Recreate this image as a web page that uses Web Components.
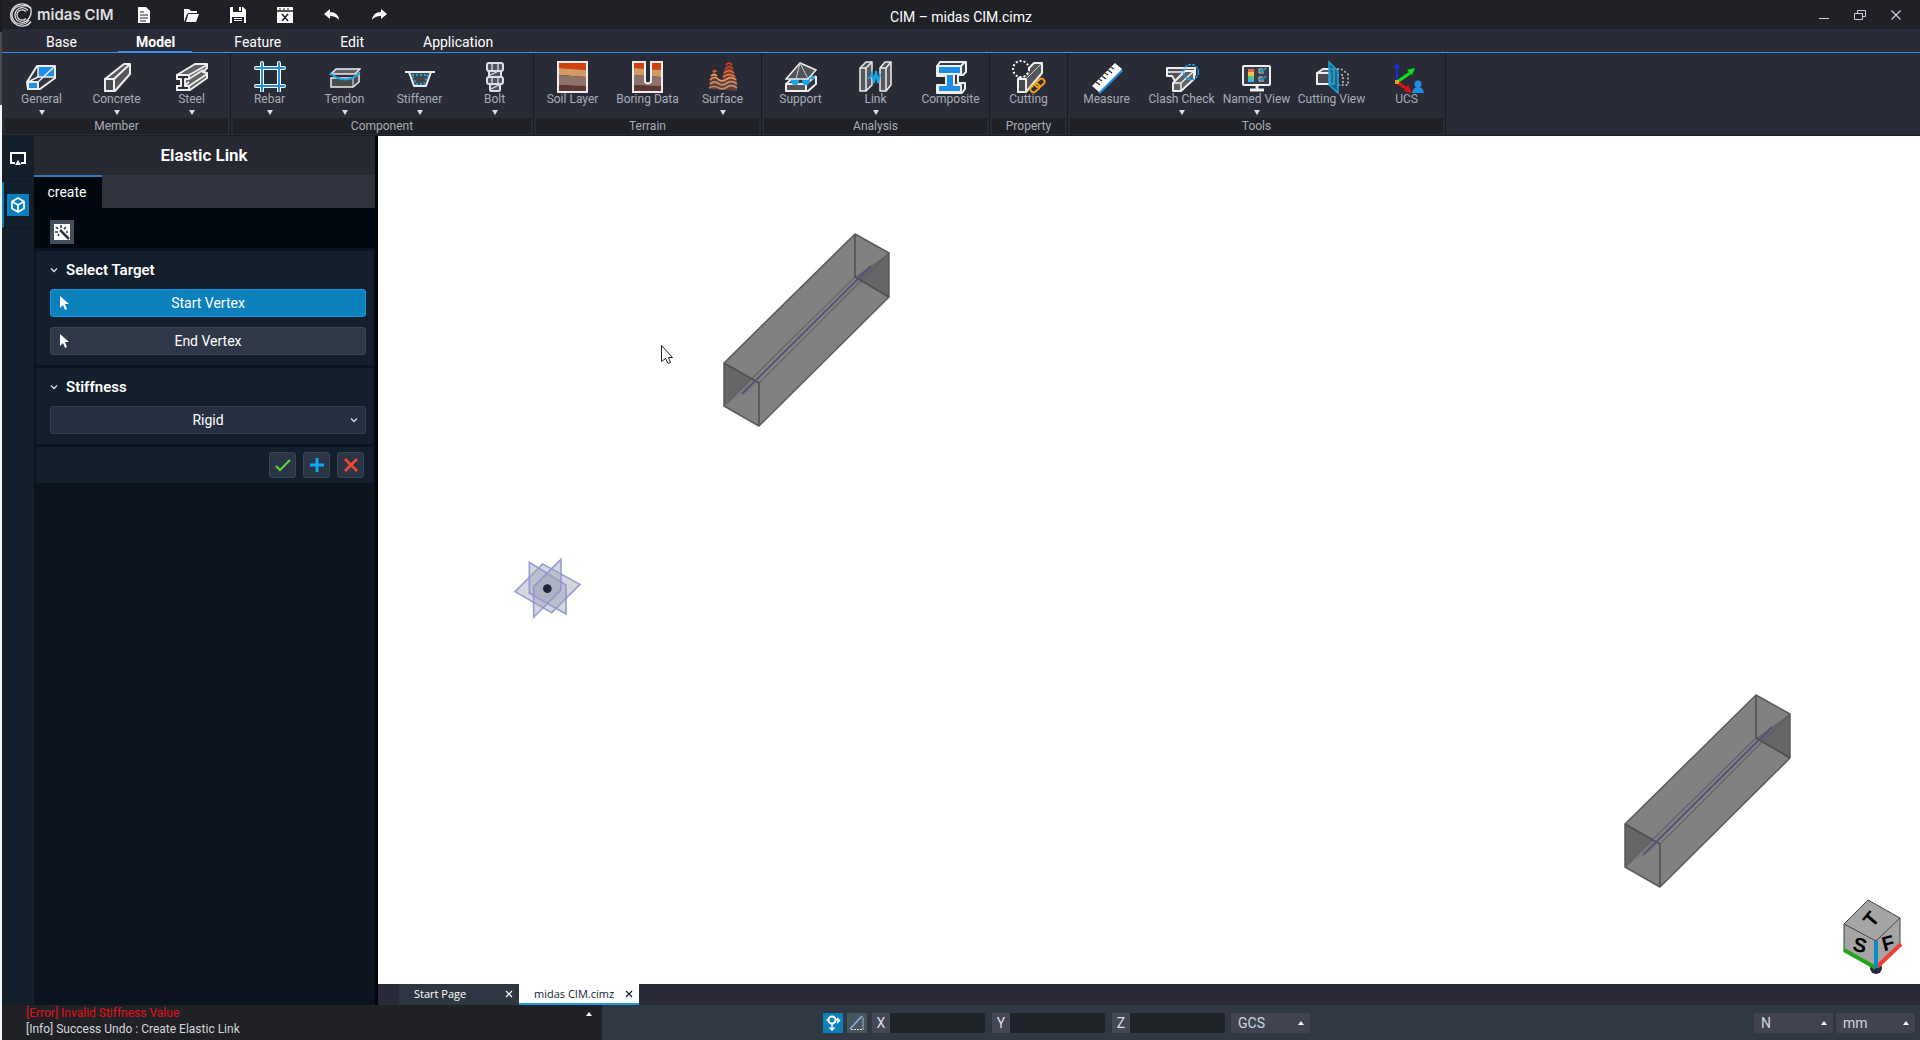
<!DOCTYPE html>
<html lang="en">
<head>
<meta charset="utf-8">
<title>CIM – midas CIM.cimz</title>
<style>
  html, body { margin: 0; height: 100%; overflow: hidden; }
  body {
    font-family: Roboto, "Liberation Sans", sans-serif; font-size: 14px; color: #fff;
    --bar: #202127; --ribbon: #292c36; --rail: #13202c; --section: #131f2d; --accent: #0c80ba; --line: #3a8fee;
  }
</style>
</head>
<body>
<cim-app></cim-app>

<script>
const W = 'stroke="#eee" stroke-width="2" stroke-linejoin="round"';
const chain = '<g fill="none" stroke="#f0a010" stroke-width="2"><rect x="-5" y="-3" width="10" height="6" rx="3" transform="translate(23 28) rotate(-40)"/><rect x="-5" y="-3" width="10" height="6" rx="3" transform="translate(28 23) rotate(-40)"/></g>';
const strata = `<path d="M3 3h27v7L3 8z" fill="#d2400c"/><path d="M3 8l27 2v7L3 15z" fill="#d49a62"/><path d="M3 15l27 2v10L3 25z" fill="#8d736a"/><path d="M3 25l27 1v5H3z" fill="#5e3734"/>`;
/* name: [viewBox size, drawing] */
const ICONS = {
  general: [32, `<path d="M1 22 11 6h18v12L14 29H2z" fill="#33363f" ${W}/><path d="M12 7h16v10H12z" fill="#1e8fe4"/><path d="M2 22h10v7H2z" fill="#1e8fe4" ${W} stroke-width="1.500"/><path d="M12 22 29 6M2 22l10-5M12 7v10h16" fill="none" stroke="#eee" stroke-width="1.500"/>`],
  concrete: [32, `<path d="M4 19 23 4h6v10L14 31H4z" fill="#54565a" ${W}/><path d="M4 19h9v12H4z" fill="#4a4b50" ${W}/><path d="M13 19 29 4" ${W}/>`],
  steel: [32, `<path d="M1 15 19 4h12v4l-4 4 4 1v5L14 30H1v-4h4v-7H1z" fill="#606266" ${W}/><path d="M1 15h12v4h-4v7h4v4H1v-4h4v-7H1z" fill="#2c2f38" ${W}/><path d="M13 15 31 5M13 19l14-9M9 25l4-3M13 26l18-12" ${W}/>`],
  rebar: [32, `<g stroke="#fff" stroke-width="4" stroke-linecap="round"><path d="M2 8h28M2 26h28M8 3v28M25 3v28"/></g><g stroke="#1e8fe4" stroke-width="2" stroke-linecap="round"><path d="M2 8h28M2 26h28M8 3v28M25 3v28"/></g>`],
  tendon: [32, `<path d="M7 9h24l-5 5H2z" fill="#606266" stroke="#eee" stroke-width="1.500"/><path d="M2 18v9h22l6-5v-9l-6 5z" fill="#484a4f" stroke="#eee" stroke-width="1.500"/><path d="M24 18v9" stroke="#eee"/><path d="M1 13q15 13 30 0" fill="none" stroke="#1ba5e0" stroke-width="2"/>`],
  stiffener: [32, `<path d="M1 12h30M5 12l5 14h12l5-14" fill="#44464c" ${W}/><path d="M8 15h16l-4 9h-8z" fill="none" stroke="#1ba5e0" stroke-width="2" stroke-dasharray="2 2"/>`],
  bolt: [32, `<g fill="#50535a" stroke="#dde" stroke-width="2"><rect x="8" y="3" width="16" height="8" rx="2"/><rect x="10" y="11" width="12" height="6"/><rect x="8" y="17" width="16" height="7" rx="2"/><rect x="11" y="24" width="10" height="7" rx="1"/><path d="M13 3v8M19 3v8M13 17v7M19 17v7M11 15l9-4M12 29l8-4" stroke-width="1.300"/></g>`],
  soil: [34, `${strata}<path d="M2 2h29v30H2z" fill="none" stroke="#eee" stroke-width="2"/>`],
  boring: [34, `${strata}<path d="M14 2h6v20q-3 3-6 0z" fill="#292c36"/><path d="M2 2h12v20q3 3 6 0V2h11v30H2z" fill="none" stroke="#eee" stroke-width="2"/>`],
  surface: [32, `<path d="M2 29 3 18l4-8 4 8 4 3 2-11q4-8 7-4l6 14v11z" fill="#5a4140"/><g fill="none" stroke-width="1.700"><path d="M19 5q3-4 6 0M18 9q5-5 8 0" stroke="#e43c1c"/><path d="M6 12q2-3 3 0M17 13q5-5 10 0M16 17q7-5 12 0" stroke="#f06a30"/><path d="M4 16q3-3 6 0M3 20q5-5 9 0 4 2 8-1 5-3 9 1" stroke="#f09450"/><path d="M3 24q5-4 9 0 4 2 8-1 5-3 10 1M2 28q5-3 10 0 4 2 8-1 5-3 10 1" stroke="#c98a62"/></g>`],
  support: [32, `<path d="M1 24 9 17h22v7l-9 8H1z" fill="#33363f" ${W}/><path d="M1 24h20v7H1z" fill="#54565a" ${W}/><path d="M21 24 31 16" ${W}/><circle cx="10" cy="21" r="4" fill="#1ba5e8"/><circle cx="21" cy="21" r="4" fill="#1ba5e8"/><path d="M26 14l4 3-2 3-4-2z" fill="#1ba5e8"/><path d="M1 19 15 3l16 7-8 9z" fill="#505259" stroke="#eee" stroke-width="1.500"/><path d="M15 3l8 16M15 3l-4 16" stroke="#ccc"/>`],
  link: [34, `<g fill="#55575c" stroke="#eee" stroke-width="1.500" stroke-linejoin="round"><path d="M1 8 7 2h6v23l-6 6H1z"/><path d="M1 8h6v23M7 8l6-6" fill="none"/><path d="M21 8 26 2h6v23l-5 6h-6z"/><path d="M21 8h6v23M27 8l5-6" fill="none"/></g><path d="M9 18h2l2-5 2 10 2-12 2 12 2-9" fill="none" stroke="#1ba5e8" stroke-width="2"/>`],
  composite: [34, `<path d="M3 6 6 2h26v10l-3 3h-5v8h7v6l-3 4H3v-8h9v-9H3z" fill="#3a3d46" ${W}/><path d="M4 6h23v8h-7v11h7v7H4v-7h8V14H4z" fill="#1e8fe4" ${W}/><path d="M27 6l4-4" ${W}/><path d="M3 14h24" stroke="#eee" stroke-width="2"/>`],
  cutting: [34, `<path d="M6 19 22 3h8v10L14 32H6z" fill="#54565a" ${W}/><path d="M6 19h8v13H6z" fill="#46484d" ${W}/><path d="M14 19 29 4" stroke="#ccc"/><circle cx="9" cy="9" r="8" fill="#292c36" stroke="#fff" stroke-width="2" stroke-dasharray="2 2"/>${chain}`],
  measure: [34, `<path d="M8 32 31 9l2 2L10 34z" fill="#1e8fe4"/><path d="M2 26 25 3l7 6L9 32z" fill="#fff"/><path d="M6 22l4 3M9 19l3 2M12 16l4 3M15 13l3 2M18 10l4 3M21 7l3 2" stroke="#333" stroke-width="1.500"/>`],
  clash: [34, `<path d="M2 8h28v7l-9 6H10L7 16H2z" fill="#50535a" ${W}/><path d="M8 23 20 11h9v8l-13 12H8z" fill="#606266" ${W}/><path d="M8 23h8v8M16 23l13-12M2 12h16" fill="none" stroke="#eee" stroke-width="1.500"/><circle cx="26" cy="12" r="7.500" fill="none" stroke="#1ba5e8" stroke-width="1.500" stroke-dasharray="3 1"/>`],
  named: [34, `<rect x="3" y="6" width="27" height="19" rx="1" fill="#3b3e46" ${W}/><path d="M17 25v5M10 30h14" stroke="#eee" stroke-width="3"/><path d="M8 9h6v3H8z" fill="#f06a50"/><path d="M8 12h6v4H8z" fill="#f0c050"/><path d="M8 16h6v3H8z" fill="#54c86a"/><path d="M8 19h6v3H8z" fill="#38b8f0"/><path d="M23 9h-4v4h5M23 17h-4v4h5" fill="none" stroke="#ccc"/><path d="M20 10l2 2 4-4M20 18l2 2 4-4" fill="none" stroke="#1ba5e8" stroke-width="1.500"/>`],
  cutview: [34, `<path d="M2 13 8 9h11v15H2z" fill="#55575c" ${W}/><path d="M2 13h13v11H2z" fill="#484a4f" ${W}/><path d="M22 9h4l7 5v11H22M22 15h6v10" fill="none" stroke="#ccc" stroke-width="1.500" stroke-dasharray="2 2"/><path d="M14 2l9 9v22l-9-8z" fill="#0e78a8" fill-opacity=".8" stroke="#1ba5e0" stroke-width="1.500"/>`],
  ucs: [34, `<path d="M7 22V6" stroke="#1030d8" stroke-width="2"/><path d="M4 8l3-6 3 6z" fill="#1030d8"/><path d="M7 22 20 13" stroke="#08e818" stroke-width="3"/><path d="M17 10l8-2-3 7z" fill="#08e818"/><path d="M7 22l10 7" stroke="#e01010" stroke-width="3"/><path d="M18 25l4 8-8-2z" fill="#e01010"/><path d="M5 20h4v4H5z" fill="#f0a010"/><circle cx="28" cy="24" r="3.500" fill="#1e8fe4"/><path d="M22 33q1-6 6-6t6 6z" fill="#1e8fe4"/>`],
  doc: [18, `<path d="M3 1h8l4 4v12H3z" fill="#fff"/><path d="M5 6h4M5 9h8M5 12h8M5 15h6" stroke="#222"/>`],
  open: [18, `<path d="M2 16V3h5l2 2h6v3H5z" fill="#fff"/><path d="M4 16 6 8h11l-3 8z" fill="#fff"/><path d="M4 14 6 7.500h10" fill="none" stroke="#222"/>`],
  save: [18, `<path d="M1 1h13l3 3v13H1z" fill="#fff"/><path d="M4 1v5h9V1M3 17v-6h12v6" fill="#222"/><path d="M10 1h2v4h-2zM5 12h8v1H5zM5 14h8v1H5z" fill="#fff"/>`],
  closewin: [18, `<path d="M1 1h16v16H1z" fill="#fff"/><path d="M1 5h16M6 8l6 7M12 8l-6 7" stroke="#222" stroke-width="1.500"/><path d="M3 3h2M7 3h2M11 3h2" stroke="#222"/>`],
  undo: [18, `<path d="M1 8l6-5v3q8 0 9 8-3-4-9-4v3z" fill="#fff"/>`],
  redo: [18, `<path d="M17 8l-6-5v3q-8 0-9 8 3-4 9-4v3z" fill="#fff"/>`],
  logo: [24, `<g fill="none" stroke="#ddd" stroke-width="1.300"><path d="M22 5.500A11.200 11.200 0 1 0 22 18.500"/><path d="M22 5.500Q18 1.500 12.500 2.800A9.200 9.200 0 1 0 20 17"/><path d="M19 7.500A7.300 7.300 0 1 0 19 16.500Q23 12 22 5.500"/><path d="M17 8.500A5.200 5.200 0 1 0 17 15.500"/></g>`],
  min: [12, `<path d="M1 9.500h10" stroke="#ccd"/>`],
  restore: [12, `<path d="M.5 4.500h8v6h-8zM3.500 4V1.500h8v6H9" fill="none" stroke="#ccd"/>`],
  close: [12, `<path d="M1.500 1.500l9 9M10.500 1.500l-9 9" stroke="#ccd" stroke-width="1.200"/>`],
  xsmall: [8, `<path d="M1 1l6 6M7 1 1 7" stroke="currentColor" stroke-width="1.200"/>`],
  screen: [18, `<path d="M6 13H2V3h14v10h-4" fill="none" stroke="#fff" stroke-width="2"/><path d="M9 10l3 5H6z" fill="#fff"/>`],
  cube: [18, `<path d="M9 2l6 3.500v7L9 16l-6-3.500v-7zM3 5.500 9 9l6-3.500M9 9v7" fill="none" stroke="#fff" stroke-width="1.700" stroke-linejoin="round"/>`],
  wand: [18, `<path d="M1 1h16v16H1z" fill="#fff"/><path d="M7 7l9 9" stroke="#2c3a46" stroke-width="2.500"/><path d="M3 4l2 2M8 2v3M13 4l-2 2M2 9h3M13 9h2M5 13l1-2" stroke="#2c3a46" stroke-width="1.600"/>`],
  chev: [10, `<path d="M2 3.500l3 3 3-3" fill="none" stroke="#dde" stroke-width="1.300"/>`],
  pick: [14, `<path d="M2 0v12l3-3 2 5 2-1-2-5h4z" fill="#fff"/>`],
  ok: [18, `<path d="M2 10l4 4L16 4" fill="none" stroke="#5ed444" stroke-width="2"/>`],
  add: [18, `<path d="M9 2v14M2 9h14" stroke="#0caaf4" stroke-width="3"/>`],
  cancel: [18, `<path d="M3 3l12 12M15 3 3 15" stroke="#ee4836" stroke-width="2.600"/>`],
  snap: [20, `<path d="M9 11v6M12 7h4" stroke="#fff" stroke-width="1.500"/><circle cx="9" cy="7" r="3.500" fill="none" stroke="#fff" stroke-width="2"/><path d="M6.500 14.500 9 17l2.500-2.500M14 5l2.500 2.500L14 10M3.500 7H6" fill="none" stroke="#fff" stroke-width="1.500"/>`],
  angle: [20, `<path d="M3 16 15 3" stroke="#8cb4e8" stroke-width="1.500"/><path d="M4 16.500h12V4" fill="none" stroke="#dde" stroke-dasharray="2 1"/>`],
};
const svg = (name, size) => { const [v, d] = ICONS[name]; return `<svg width="${size || v}" height="${size || v}" viewBox="0 0 ${v} ${v}" aria-hidden="true">${d}</svg>`; };

const RESET = `*{box-sizing:border-box}button,input,select{font:inherit;color:inherit;margin:0;padding:0;border:0;background:none;outline:0}svg{display:block;flex:none}`;
function define(tag, css, html) {
  customElements.define(tag, class extends HTMLElement {
    constructor() { super(); this.attachShadow({ mode: 'open' }); }
    connectedCallback() {
      this.shadowRoot.innerHTML = `<style>${RESET}${css}</style>${typeof html === 'function' ? html(this) : html}`;
    }
  });
}

define('title-bar', `
  :host{display:grid;grid-template-columns:1fr auto 1fr;align-items:center;height:29px;background:var(--bar)}
  .left{display:flex;align-items:center;padding-left:7px}
  .brand{display:flex;align-items:center;gap:4px;width:111px;font:600 15px Inter,sans-serif;color:#ddd}
  button{display:grid;place-items:center;height:28px}
  .left button{width:47px}
  .mid{padding-top:4px}
  .right{display:flex;justify-content:flex-end;padding-right:6px}
  .right button{width:36px}`,
  `<div class="left"><div class="brand">${svg('logo')}<span>midas CIM</span></div>
   ${[['doc','New'],['open','Open'],['save','Save'],['closewin','Close file'],['undo','Undo'],['redo','Redo']].map(([i, t]) => `<button aria-label="${t}">${svg(i)}</button>`).join('')}</div>
   <div class="mid">CIM – midas CIM.cimz</div>
   <div class="right"><button aria-label="Minimize">${svg('min')}</button><button aria-label="Restore">${svg('restore')}</button><button aria-label="Close">${svg('close')}</button></div>`);

define('menu-tabs', `
  :host{display:flex;gap:24px;height:24px;padding-left:26px;background:var(--ribbon);border-bottom:1px solid var(--line)}
  button{padding:3px 17px 0 18px;height:23px;border-bottom:1px solid transparent}
  .on{font-weight:700;border-color:var(--line)}`,
  ['Base', 'Model', 'Feature', 'Edit', 'Application'].map(t => `<button class="${t === 'Model' ? 'on' : ''}">${t}</button>`).join(''));

define('ribbon-button', `
  :host{display:block;width:75px}
  button{display:flex;flex-direction:column;align-items:center;width:100%;height:65px;padding-top:7px;font-size:12px;line-height:14px;color:#a9adb8}
  .pic{display:grid;place-items:center;height:32px}
  i{margin-top:4px;border:3px solid transparent;border-top:5px solid #dde;border-bottom:0}
  .name{white-space:nowrap}`,
  el => `<button><span class="pic">${svg(el.getAttribute('icon'))}</span><span class="name"><slot></slot></span>${el.hasAttribute('menu') ? '<i></i>' : ''}</button>`);

define('ribbon-group', `
  :host{display:block;padding:0 1px;border-right:1px solid #191b22}
  .items{display:flex}
  .cap{margin:0 1px;height:16px;line-height:17px;font-size:12px;text-align:center;color:#a9adb8;background:var(--bar)}`,
  el => `<div class="items"><slot></slot></div><div class="cap">${el.getAttribute('caption')}</div>`);

const GROUPS = [
  ['Member', [['general', 'General', 1], ['concrete', 'Concrete', 1], ['steel', 'Steel', 1]]],
  ['Component', [['rebar', 'Rebar', 1], ['tendon', 'Tendon', 1], ['stiffener', 'Stiffener', 1], ['bolt', 'Bolt', 1]]],
  ['Terrain', [['soil', 'Soil Layer'], ['boring', 'Boring Data'], ['surface', 'Surface', 1]]],
  ['Analysis', [['support', 'Support'], ['link', 'Link', 1], ['composite', 'Composite']]],
  ['Property', [['cutting', 'Cutting']]],
  ['Tools', [['measure', 'Measure'], ['clash', 'Clash Check', 1], ['named', 'Named View', 1], ['cutview', 'Cutting View'], ['ucs', 'UCS']]],
];
define('ribbon-bar', `:host{display:flex;height:83px;padding:0 1px;background:var(--ribbon);border-bottom:1px solid #1c1e26}`,
  GROUPS.map(([c, items]) => `<ribbon-group caption="${c}">${items.map(([i, t, m]) => `<ribbon-button icon="${i}"${m ? ' menu' : ''}>${t}</ribbon-button>`).join('')}</ribbon-group>`).join(''));

define('side-rail', `
  :host{display:flex;flex-direction:column;width:32px;background:var(--rail)}
  button{display:grid;place-items:center;height:46px;border-left:2px solid transparent;padding-right:2px;border-bottom:1px solid #0e1822}
  .on{border-left-color:var(--accent)}
  .on span{display:grid;place-items:center;width:22px;height:22px;background:var(--accent)}`,
  `<button aria-label="View">${svg('screen')}</button><button class="on" aria-label="Model"><span>${svg('cube')}</span></button>`);

define('panel-section', `
  :host{display:block;margin:0 2px 3px;padding:0 7px 10px 14px;background:var(--section)}
  h3{display:flex;align-items:center;gap:7px;height:38px;margin:0 0 0 -1px;font-size:15px;font-weight:600;line-height:38px}
  .body{display:flex;flex-direction:column;gap:10px}`,
  el => `<h3>${svg('chev')}${el.getAttribute('heading')}</h3><div class="body"><slot></slot></div>`);

define('pick-button', `
  :host{display:block}
  button{display:grid;grid-template-columns:26px 1fr 26px;align-items:center;width:100%;height:28px;padding:0 5px;border:1px solid #3c4558;border-radius:3px;background:#2f3848}
  button svg{margin-left:2px}
  :host([active]) button{background:var(--accent);border-color:#1c94e4}`,
  `<button>${svg('pick')}<span><slot></slot></span></button>`);

define('choice-box', `
  :host{display:grid;align-items:center}
  select,svg{grid-area:1/1}
  select{appearance:none;width:100%;height:28px;text-align:center;text-align-last:center;border:1px solid #364055;border-radius:3px;background:#273043}
  svg{justify-self:end;margin-right:7px;pointer-events:none}`,
  el => `<select aria-label="${el.getAttribute('label')}"><option>${el.getAttribute('value')}</option></select>${svg('chev')}`);

define('property-panel', `
  :host{display:flex;flex-direction:column;width:344px;background:#0b131f;border-right:3px solid #03060b}
  h2{margin:0;height:39px;line-height:39px;text-align:center;font-size:17px;font-weight:600;background:#262932;padding-right:1px}
  nav{display:flex;height:33px;background:#30333e}
  nav button{width:68px;padding:0 2px 2px 0;border-top:2px solid #3577bd;background:#02070e}
  .tools{display:flex;height:40px;padding:12px 16px 0;margin-bottom:3px;background:#02080f}
  .tools button{display:grid;place-items:center;width:24px;height:24px;background:#43505c}
  .foot{display:flex;justify-content:flex-end;gap:7px;margin:0 2px;height:36px;padding:5px 9px;background:var(--section)}
  .foot button{display:grid;place-items:center;width:27px;height:26px;border:1px solid #3b4456;border-radius:3px;background:#2c3546}`,
  `<h2>Elastic Link</h2><nav><button>create</button></nav>
   <div class="tools"><button aria-label="Pick settings">${svg('wand')}</button></div>
   <panel-section heading="Select Target"><pick-button active>Start Vertex</pick-button><pick-button>End Vertex</pick-button></panel-section>
   <panel-section heading="Stiffness"><choice-box label="Stiffness" value="Rigid"></choice-box></panel-section>
   <div class="foot"><button aria-label="OK">${svg('ok')}</button><button aria-label="Apply">${svg('add')}</button><button aria-label="Cancel">${svg('cancel')}</button></div>`);

define('beam-solid', `:host{display:block}`,
  `<svg width="168" height="194" viewBox="-1 -1 168 194"><g stroke-linejoin="round">
    <path d="M0 129 131 0l34 19v44L35 192 0 172z" fill="#81817f"/>
    <path d="M0 129l35 20-35 23zM131 43l34-24v44z" fill="#5d5d60" fill-opacity=".75"/>
    <path d="M0 172 131 43l4 3L35 149z" fill="#8b8b8a" fill-opacity=".6"/>
    <path d="M0 172 131 43M35 149 165 19" stroke="#5b5b60" stroke-opacity=".7" stroke-width="1.500" fill="none"/>
    <path d="M131 0v43l34 20M0 129l35 20v43" stroke="#4e4e52" stroke-width="1.500" fill="none"/>
    <path d="M0 129 131 0l34 19v44L35 192 0 172z" fill="none" stroke="#5a5a5c" stroke-width="1.500"/></g>
    <path d="M18 160 147 32" stroke="#51537c" stroke-width="2"/></svg>`);

define('datum-planes', `:host{display:block}`,
  `<svg width="110" height="90" viewBox="0 0 330 270"><g fill="#9a9fb4" fill-opacity=".42" stroke="#8a93d0" stroke-opacity=".85" stroke-width="5">
    <path d="M75 155l83-83 112 61-85 85z"/><path d="M118 67v93l110 62v-87z"/><path d="M213 58v92l-82 82v-92z"/></g><circle cx="172" cy="146" r="13" fill="#20243a"/></svg>`);

define('view-cube', `:host{display:block}text{font:700 20px "Liberation Sans",sans-serif;text-anchor:middle}`,
  `<svg width="60" height="76" viewBox="0 0 60 76"><circle cx="33" cy="69" r="6" fill="#26293c"/>
    <path d="M25 1l32 18v27L33 69 1 52V25z" fill="#a5a5a5" stroke="#444" stroke-width="1"/><path d="M1 25l32 17 24-23M33 42v27" fill="none" stroke="#444"/>
    <path d="M1 51l32 18" stroke="#20a41c" stroke-width="4"/><path d="M34 68 58 45" stroke="#ee4034" stroke-width="4"/><path d="M33 42v27" stroke="#0c8cc4" stroke-width="4"/>
    <text transform="translate(28 20) rotate(-50)" y="7">T</text><text transform="translate(17 46) rotate(15)" y="7">S</text><text transform="translate(45 44) rotate(-15)" y="7">F</text></svg>`);

define('model-view', `
  :host{display:block;position:relative;flex:1;min-height:0;overflow:hidden;background:#fffffd}
  :host>*{position:absolute}
  .b1{left:345px;top:97px}.b2{left:1246px;top:558px}.d{left:112px;top:404px}.c{right:17px;bottom:9px}.p{left:282px;top:208px}`,
  `<beam-solid class="b1"></beam-solid><beam-solid class="b2"></beam-solid><datum-planes class="d"></datum-planes><view-cube class="c"></view-cube>
   <svg class="p" width="14" height="21" viewBox="0 0 14 21"><path d="M1.500 1.500v16l4-3 2.500 5 2.500-1-2-5h4z" fill="#fff" stroke="#223"/></svg>`);

define('doc-tabs', `
  :host{display:flex;height:21px;padding-left:21px;background:#292b36;font:11px "Open Sans",sans-serif}
  .tab{display:flex;align-items:center;justify-content:space-between;width:120px;padding:0 6px 0 15px;background:#2e3741;border-bottom:2px solid #2e3741}
  .on{background:#fff;color:#123;border-color:#1e9ade}
  .tab button{display:grid;place-items:center}`,
  `<div class="tab"><span>Start Page</span><button aria-label="Close Start Page">${svg('xsmall')}</button></div>
   <div class="tab on"><span>midas CIM.cimz</span><button aria-label="Close midas CIM.cimz">${svg('xsmall')}</button></div>`);

define('message-log', `
  :host{display:flex;justify-content:space-between;width:600px;padding:0 10px 0 24px;background:var(--bar);font-size:12px;line-height:16px;color:#d4d6da}
  p{margin:0}.err{color:#e01016}
  button{align-self:flex-start;height:17px}
  i{display:block;border:3px solid transparent;border-bottom:4px solid #fff;border-top:0}`,
  `<div><p class="err">[Error] Invalid Stiffness Value</p><p>[Info] Success Undo : Create Elastic Link</p></div><button aria-label="Expand log"><i></i></button>`);

define('coord-field', `
  :host{display:flex;width:113px;height:20px}
  label{width:18px;line-height:20px;text-align:center;background:#454853;color:#dde}
  input{flex:1;min-width:0;background:#1f2428;border-radius:0 2px 2px 0}`,
  el => `<label for="v">${el.getAttribute('axis')}</label><input id="v">`);

define('unit-select', `
  :host{display:grid;align-items:center;width:79px;height:20px}
  select,i{grid-area:1/1}
  select{appearance:none;height:20px;padding-left:7px;border-radius:2px;background:#414450;color:#ccd4e0}
  i{justify-self:end;margin-right:6px;pointer-events:none;border:3px solid transparent;border-bottom:4px solid #fff;border-top:0}`,
  el => `<select aria-label="${el.getAttribute('label')}"><option>${el.getAttribute('value')}</option></select><i></i>`);

define('status-bar', `
  :host{display:flex;flex:1;align-items:flex-start;padding:8px 5px 0 221px;background:#2f3843}
  .tg{display:grid;place-items:center;width:20px;height:20px;margin-right:4px;background:#45565f}
  .tg.on{background:var(--accent)}
  .xyz{display:flex;gap:7px;margin:0 6px 0 1px}
  .units{display:flex;gap:3px;margin-left:auto}`,
  `<button class="tg on" aria-label="Snap">${svg('snap')}</button><button class="tg" aria-label="Angle">${svg('angle')}</button>
   <div class="xyz"><coord-field axis="X"></coord-field><coord-field axis="Y"></coord-field><coord-field axis="Z"></coord-field></div>
   <unit-select label="Coordinate system" value="GCS"></unit-select>
   <div class="units"><unit-select label="Force unit" value="N"></unit-select><unit-select label="Length unit" value="mm"></unit-select></div>`);

define('cim-app', `
  :host{display:flex;flex-direction:column;height:100vh;padding-left:2px;background:linear-gradient(#1c1c1c 0 32px,#4a4a4a 32px 105px,#f6f6f6 105px);box-sizing:border-box}
  main{display:flex;flex:1;min-height:0}
  .work{display:flex;flex-direction:column;flex:1;min-width:0}
  footer{display:flex;height:35px}`,
  `<title-bar></title-bar><menu-tabs></menu-tabs><ribbon-bar></ribbon-bar>
   <main><side-rail></side-rail><property-panel></property-panel><div class="work"><model-view></model-view><doc-tabs></doc-tabs></div></main>
   <footer><message-log></message-log><status-bar></status-bar></footer>`);
</script>
</body>
</html>
